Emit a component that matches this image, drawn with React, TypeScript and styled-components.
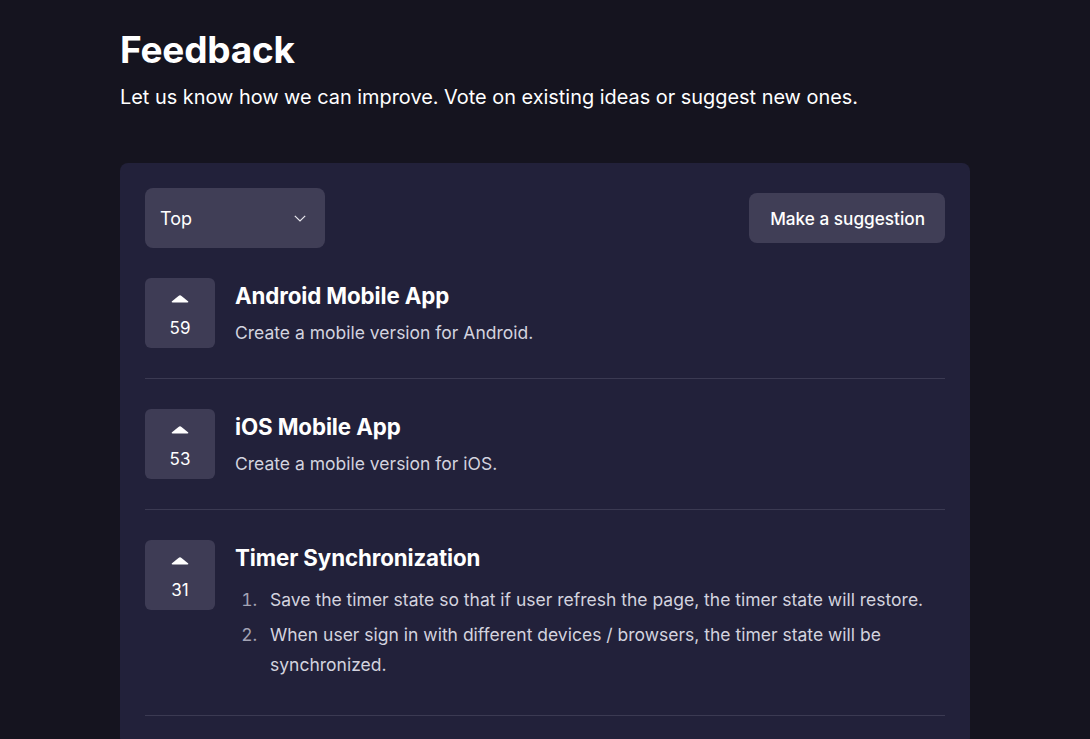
import React from "react";
import styled, { createGlobalStyle } from "styled-components";

const Global = createGlobalStyle`
  html, body { margin: 0; padding: 0; background: #15141f; }
  body { font-family: Inter, "Noto Sans", sans-serif; color: #ffffff; -webkit-font-smoothing: antialiased; }
  * { box-sizing: border-box; }
`;

const Page = styled.main`
  width: 850px;
  margin: 0 0 0 120px;
  padding-top: 28px;
`;

const Title = styled.h1`
  margin: 0;
  font-size: 37px;
  line-height: 44px;
  font-weight: 700;
  letter-spacing: -0.2px;
`;

const Subtitle = styled.p`
  margin: 11px 0 0;
  font-size: 19.9px;
  line-height: 28px;
  color: #ffffff;
`;

const Card = styled.section`
  margin-top: 52px;
  background: #22213a;
  border-radius: 8px;
  padding: 25px 25px 30px;
`;

const Toolbar = styled.div`
  display: flex;
  justify-content: space-between;
  align-items: center;
`;

const Select = styled.div`
  width: 180px;
  height: 60px;
  background: #403e56;
  border-radius: 8px;
  display: flex;
  align-items: center;
  justify-content: space-between;
  padding: 0 19px 0 15px;
  font-size: 18px;
  color: #fff;
`;

const Button = styled.button`
  height: 50px;
  padding: 0 20px 0 21px;
  background: #403e56;
  border: none;
  border-radius: 8px;
  color: #fff;
  font-family: inherit;
  font-size: 17.2px;
  font-weight: 500;
`;

const List = styled.div`
  display: flex;
  flex-direction: column;
`;

const Item = styled.article`
  display: flex;
  gap: 20px;
  padding: 30px 0;
  border-bottom: 1px solid #3b3a52;
`;

const Vote = styled.button`
  flex: none;
  width: 70px;
  height: 70px;
  background: #3e3c55;
  border: none;
  border-radius: 6px;
  display: flex;
  flex-direction: column;
  align-items: center;
  justify-content: flex-start;
  gap: 15px;
  color: #fff;
  font-family: inherit;
  font-size: 17px;
  line-height: 20px;
  padding: 17px 0 0;
`;

const Body = styled.div`
  display: flex;
  flex-direction: column;
`;

const ItemTitle = styled.h2`
  margin: 3px 0 0;
  font-size: 22.3px;
  line-height: 30px;
  font-weight: 700;
  letter-spacing: -0.1px;
`;

const Desc = styled.p`
  margin: 8px 0 0;
  font-size: 17.5px;
  line-height: 28px;
  color: #d3d3df;
`;

const Ol = styled.ol`
  margin: 12px 0 0;
  padding-left: 27px;
  font-size: 17.5px;
  line-height: 30px;
  color: #d3d3df;
  li { margin-bottom: 5px; padding-left: 8px; }
  li::marker { color: #a3a3b4; }
`;

const Caret = () => (
  <svg width="18" height="8" viewBox="0 0 18 8" aria-hidden>
    <path d="M7.5 0.9 Q9 -0.3 10.5 0.9 L17 6.3 Q18 7.6 16.4 7.6 L1.6 7.6 Q0 7.6 1 6.3 Z" fill="#ffffff" />
  </svg>
);

const Chevron = () => (
  <svg width="12" height="7" viewBox="0 0 12 7" aria-hidden>
    <path d="M0.8 0.8 L6 6 L11.2 0.8" stroke="#e8e8ee" strokeWidth="1.2" fill="none" />
  </svg>
);

type Idea = { votes: number; title: string; desc?: string; steps?: string[] };

const ideas: Idea[] = [
  { votes: 59, title: "Android Mobile App", desc: "Create a mobile version for Android." },
  { votes: 53, title: "iOS Mobile App", desc: "Create a mobile version for iOS." },
  {
    votes: 31,
    title: "Timer Synchronization",
    steps: [
      "Save the timer state so that if user refresh the page, the timer state will restore.",
      "When user sign in with different devices / browsers, the timer state will be synchronized.",
    ],
  },
];

export default function App() {
  return (
    <>
      <Global />
      <Page>
        <Title>Feedback</Title>
        <Subtitle>Let us know how we can improve. Vote on existing ideas or suggest new ones.</Subtitle>
        <Card>
          <Toolbar>
            <Select>
              <span>Top</span>
              <Chevron />
            </Select>
            <Button>Make a suggestion</Button>
          </Toolbar>
          <List>
            {ideas.map((idea) => (
              <Item key={idea.title}>
                <Vote>
                  <Caret />
                  <span>{idea.votes}</span>
                </Vote>
                <Body>
                  <ItemTitle>{idea.title}</ItemTitle>
                  {idea.desc && <Desc>{idea.desc}</Desc>}
                  {idea.steps && (
                    <Ol>
                      {idea.steps.map((s) => (
                        <li key={s}>{s}</li>
                      ))}
                    </Ol>
                  )}
                </Body>
              </Item>
            ))}
          </List>
        </Card>
      </Page>
    </>
  );
}
